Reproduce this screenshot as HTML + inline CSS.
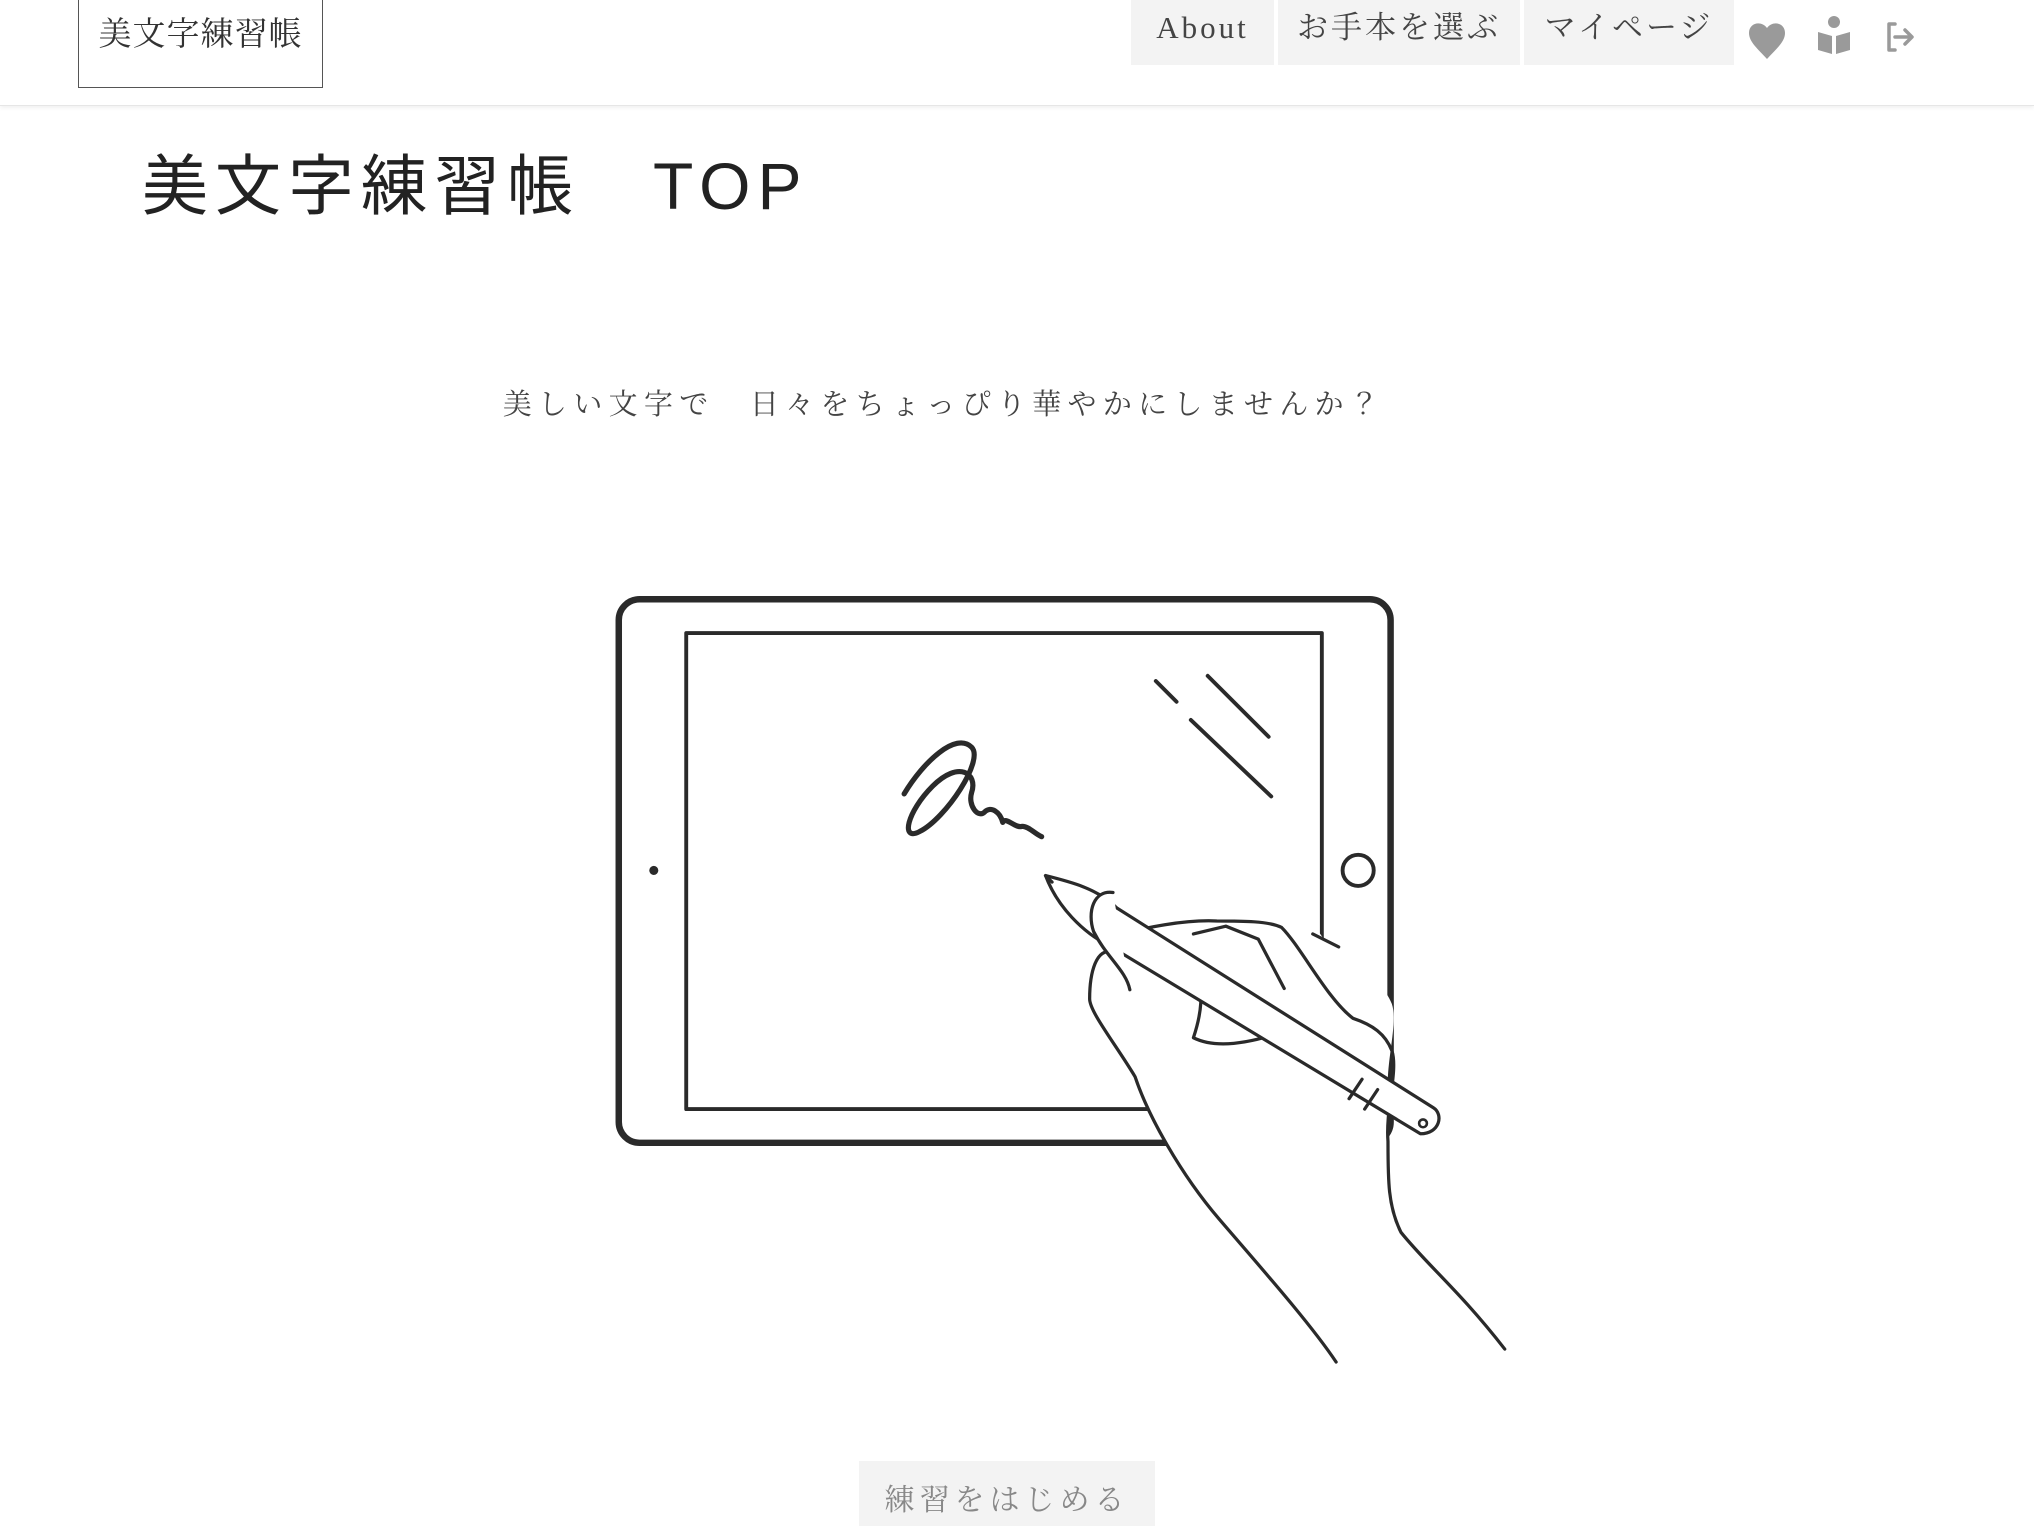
<!DOCTYPE html>
<html><head><meta charset="utf-8"><style>
html,body{margin:0;padding:0;background:#fff;width:2034px;height:1526px;overflow:hidden;position:relative}
.serif{font-family:"Liberation Serif","Noto Serif CJK JP",serif}
.sans{font-family:"Liberation Sans","Noto Sans CJK JP",sans-serif}
#hdr{position:absolute;left:0;top:0;width:2034px;height:105px;border-bottom:1px solid #e6e6e6;box-shadow:0 2px 4px rgba(0,0,0,.06)}
#logo{position:absolute;left:78px;top:-2px;width:245px;height:90px;border:1.5px solid #555;border-top:none;box-sizing:border-box;font-size:33px;color:#333;text-align:center;line-height:74px;letter-spacing:1px}
.nav{position:absolute;top:0;height:65px;background:#f3f3f3;color:#444;font-size:31px;text-align:center;line-height:56px;letter-spacing:3px}
#title{position:absolute;left:142px;top:133px;font-size:66px;color:#222;letter-spacing:7px;white-space:nowrap}
#sub{position:absolute;left:0;width:1888px;top:382px;text-align:center;font-size:29px;color:#444;letter-spacing:6.3px;white-space:nowrap}
#btn{position:absolute;left:859px;top:1461px;width:296px;height:80px;background:#f3f3f3;color:#888;font-size:30px;text-align:center;line-height:80px;letter-spacing:5px}
svg{position:absolute;left:0;top:0}
</style></head><body>
<div id="hdr">
<div id="logo" class="serif">美文字練習帳</div>
<div class="nav serif" style="left:1131px;width:143px">About</div>
<div class="nav serif" style="left:1278px;width:242px">お手本を選ぶ</div>
<div class="nav serif" style="left:1524px;width:210px">マイページ</div>
<svg width="2034" height="105" viewBox="0 0 2034 105">
<path d="M1767 28c-6-8-18-5-18 5 0 9 9 16 18 26 9-10 18-17 18-26 0-10-12-13-18-5z" fill="#9a9a9a"/>
<circle cx="1834" cy="22" r="6" fill="#9a9a9a"/>
<path d="M1818 32l14 4v18l-14-4z M1850 32l-14 4v18l14-4z" fill="#9a9a9a"/>
<path d="M1895 24h-6v26h6 M1895 37h16 M1905 30l7 7-7 7" fill="none" stroke="#9a9a9a" stroke-width="3.5" stroke-linecap="round" stroke-linejoin="round"/>
</svg>
</div>
<div id="title" class="sans">美文字練習帳　TOP</div>
<div id="sub" class="serif">美しい文字で　日々をちょっぴり華やかにしませんか？</div>
<svg width="2034" height="1526" viewBox="0 0 1568 1176.4" style="top:0">
<g fill="none" stroke="#2a2a2a" stroke-linecap="round" stroke-linejoin="round">
<rect x="477" y="462" width="595" height="419" rx="16" stroke-width="5"/>
<rect x="529" y="488" width="490" height="367" stroke-width="3"/>
<circle cx="1047" cy="671" r="12" stroke-width="3"/>
<circle cx="504" cy="671" r="3" fill="#2a2a2a"/>
<path d="M891 525l16 16 M931 521l47 47 M918 555l62 59" stroke-width="3"/>
<path d="M697 612c15-25 40-48 52-36 10 10-20 55-40 65-15 8-10-15 10-35 20-20 35-10 30 5-3 10 5 20 10 15 5-5 12 0 14 8 2-5 10 5 15 3 5 0 10 6 15 8" stroke-width="4"/>
<path d="M858 688c20-10 60-15 80-14 20 0 40 0 50 5 15 15 35 55 55 70 15 5 25 12 30 25 5 15-5 45-3 70 0 30 0 50 10 70 20 25 45 45 80 90 L1160 1052 H1030 c-20-30-60-75-90-110-30-35-55-80-65-110-15-25-35-50-35-60 0-20 5-40 18-36z" fill="#fff" stroke="none"/>
<path d="M1160 1040c-35-45-60-65-80-90-10-20-10-40-10-70-2-25 8-55 3-70-5-13-15-20-30-25-20-15-40-55-55-70-10-5-30-5-50-5-20-1-60 4-80 14 M1030 1050c-20-30-60-75-90-110-30-35-55-80-65-110-15-25-35-50-35-60 0-20 5-40 18-36" stroke-width="2.5"/>
<path d="M920 720l25-6 25 10 20 38 M920 740c10 25 5 45 0 60 20 10 50 2 70-5 M1032 730l-20-10" stroke-width="2.5"/>
<path d="M806 675c20 5 40 10 55 25l244 154c8 5 5 20-10 20l-240-145c-20-10-40-30-49-54z" fill="#fff" stroke-width="2.5"/>
<path d="M1050 832l-10 15 M1062 840l-10 15 M806 675l5 5" stroke-width="2.5"/>
<circle cx="1097" cy="866" r="3" stroke-width="2"/>
<path d="M858 688c-15-2-20 15-15 30 10 20 25 30 28 45" fill="#fff" stroke-width="2.5"/>
</g>
</svg>
<div id="btn" class="serif">練習をはじめる</div>
</body></html>
